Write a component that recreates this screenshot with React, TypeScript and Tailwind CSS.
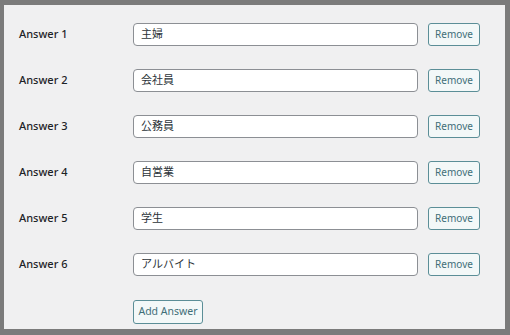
const answers = ['主婦', '会社員', '公務員', '自営業', '学生', 'アルバイト'];

const font = { fontFamily: '"Noto Sans", "Noto Sans CJK JP", sans-serif' };

export default function App() {
  return (
    <div className="w-[510px] h-[335px] bg-[#7b7b7b] pt-[5px] pl-[4px] pr-[5px] pb-[6px]" style={font}>
      <div className="h-full bg-[#f0f0f1] pt-[18px] pl-[15px]">
        <div className="flex flex-col gap-[23px]">
          {answers.map((a, i) => (
            <div key={a} className="flex items-center h-[23px]">
              <span className="w-[114px] text-[11px] font-medium text-[#1d2327]">Answer {i + 1}</span>
              <div className="w-[285px] h-[23px] bg-white border border-[#8c8f94] rounded-[4px] flex items-center px-[7px] text-[11px] text-[#2c3338]">
                {a}
              </div>
              <button className="ml-[10px] w-[52px] h-[23px] border border-[#5b8e97] rounded-[3px] bg-[#f3f8f8] text-[10px] text-[#3f6f78]">
                Remove
              </button>
            </div>
          ))}
        </div>
        <div className="mt-[21px] ml-[114px]">
          <button className="w-[70px] h-[24px] border border-[#5b8e97] rounded-[3px] bg-[#f3f8f8] text-[10.5px] text-[#3f6f78]">
            Add Answer
          </button>
        </div>
      </div>
    </div>
  );
}
